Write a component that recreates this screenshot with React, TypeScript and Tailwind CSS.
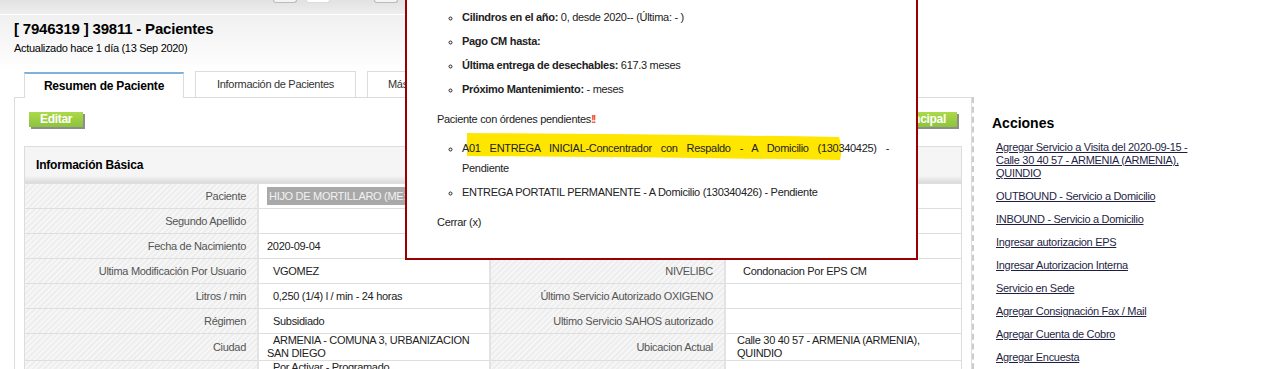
import React from 'react';

type Row = {
  l1: string;
  v1?: React.ReactNode;
  l2: string;
  v2?: React.ReactNode;
};

const ROWS: Row[] = [
  {
    l1: 'Paciente',
    v1: (
      <span className="inline-block bg-[#a9a9a9] px-[2px] leading-[18px] whitespace-nowrap text-[#f2f2f2]">
        HIJO DE MORTILLARO (ME: 1094954812)
      </span>
    ),
    l2: 'Documento',
    v2: 'RC 1094954812',
  },
  { l1: 'Segundo Apellido', v1: '', l2: 'EPS', v2: 'ASMET SALUD' },
  { l1: 'Fecha de Nacimiento', v1: '2020-09-04', l2: 'Teléfono', v2: '3117654321' },
  {
    l1: 'Ultima Modificación Por Usuario',
    v1: <span className="pl-[6px]">VGOMEZ</span>,
    l2: 'NIVELIBC',
    v2: <span className="pl-[6px]">Condonacion Por EPS CM</span>,
  },
  {
    l1: 'Litros / min',
    v1: <span className="pl-[6px]">0,250 (1/4) l / min - 24 horas</span>,
    l2: 'Último Servicio Autorizado OXIGENO',
  },
  {
    l1: 'Régimen',
    v1: <span className="pl-[6px]">Subsidiado</span>,
    l2: 'Ultimo Servicio SAHOS autorizado',
  },
  {
    l1: 'Ciudad',
    v1: <span className="block indent-[6px]">ARMENIA - COMUNA 3, URBANIZACION SAN DIEGO</span>,
    l2: 'Ubicacion Actual',
    v2: 'Calle 30 40 57 - ARMENIA (ARMENIA), QUINDIO',
  },
  {
    l1: 'Estado',
    v1: (
      <span className="block indent-[6px]">
        Por Activar - Programado
        <br />
        desde 2020-09-15
      </span>
    ),
    l2: 'Observaciones',
  },
];

const ACCIONES = [
  'OUTBOUND - Servicio a Domicilio',
  'INBOUND - Servicio a Domicilio',
  'Ingresar autorizacion EPS',
  'Ingresar Autorizacion Interna',
  'Servicio en Sede',
  'Agregar Consignación Fax / Mail',
  'Agregar Cuenta de Cobro',
  'Agregar Encuesta',
];

const labelCls =
  'flex items-center justify-end border-b border-r-2 border-b-[#dedede] border-r-[#e3e3e3] bg-[repeating-linear-gradient(135deg,#f6f6f6_0px,#f6f6f6_2px,#eeeeee_2px,#eeeeee_4px)] pr-[11px] text-right text-[#555]';
const valueCls = 'flex min-h-[25px] items-center overflow-hidden border-b border-[#dedede] pr-[8px]';

function GreenButton({ children }: { children: React.ReactNode }) {
  return (
    <div className="flex h-[15px] items-center bg-linear-to-b from-[#acd94a] to-[#8cc43a] px-[11px] text-[12px] leading-[15px] font-bold text-white shadow-[2px_2px_0_#8d8d8d]">
      {children}
    </div>
  );
}

function App() {
  return (
    <div className="relative h-[369px] w-[1278px] overflow-hidden bg-white font-['Liberation_Sans',Arial,sans-serif] text-[11px] tracking-[-0.3px] text-[#222]">
      {/* barra superior */}
      <div className="flex h-[15px] w-[880px] items-start border-b border-white bg-linear-to-b from-[#e2e2e2] to-[#eeeeee] pl-[273px]">
        <div className="h-[3px] w-[24px] rounded-b-[4px] border border-t-0 border-[#bbb] bg-[#f4f4f4]" />
        <div className="ml-[9px] h-[3px] w-[24px] rounded-b-[4px] border border-t-0 border-[#ddd] bg-white" />
        <div className="ml-[44px] h-[3px] w-[24px] rounded-b-[4px] border border-t-0 border-[#bbb] bg-[#f4f4f4]" />
      </div>

      <div className="h-[56px] w-[880px] bg-linear-to-b from-[#f0f0f0] to-white px-[14px] pt-[5px]">
        <div className="text-[15px] leading-[18px] font-bold tracking-[-0.2px] text-black">
          [ 7946319 ] 39811 - Pacientes
        </div>
        <div className="mt-[3px] text-[11px] leading-[14px] text-black">Actualizado hace 1 día (13 Sep 2020)</div>
      </div>

      {/* tabs */}
      <div className="flex h-[27px] items-end gap-[11px] pl-[24px]">
        <div className="relative z-10 flex h-[26px] w-[160px] items-center justify-center border-x border-t-2 border-x-[#dcdcdc] border-t-[#7fb2de] bg-white text-[12px] font-bold tracking-[-0.2px] text-black">
          Resumen de Paciente
        </div>
        <div className="flex h-[27px] w-[161px] items-center justify-center border-x border-t border-[#dcdcdc] bg-white pb-px text-[11px] text-[#333]">
          Información de Pacientes
        </div>
        <div className="flex h-[27px] w-[150px] items-center border-x border-t border-[#dcdcdc] bg-white pb-px pl-[20px] text-[11px] text-[#333]">
          Más Información
        </div>
      </div>

      <div className="-mt-px flex">
        <div className="ml-[14px] w-[958px] border-x border-t border-[#dcdcdc] px-[9px] pt-[14px]">
          <div className="flex justify-between px-[5px]">
            <GreenButton>Editar</GreenButton>
            <GreenButton>Ir a Dirección Principal</GreenButton>
          </div>

          <div className="mt-[19px] border border-[#dcdcdc]">
            <div className="flex h-[37px] items-center border-b border-[#dedede] bg-[linear-gradient(to_bottom,#f5f5f5_80%,#dadada)] pl-[11px] text-[12px] font-bold tracking-[-0.2px] text-black">
              Información Básica
            </div>
            <div className="grid grid-cols-[234px_232px_235px_235px] leading-[13px]">
              {ROWS.map((r, i) => (
                <React.Fragment key={i}>
                  <div className={labelCls}>{r.l1}</div>
                  <div className={valueCls + ' border-r-2 border-r-[#e3e3e3] pl-[8px]'}>
                    <div>{r.v1}</div>
                  </div>
                  <div className={labelCls}>{r.l2}</div>
                  <div className={valueCls + ' pl-[11px]'}>
                    <div>{r.v2}</div>
                  </div>
                </React.Fragment>
              ))}
            </div>
          </div>
        </div>

        {/* acciones */}
        <div className="flex-1 border-l-2 border-dashed border-[#cccccc] pt-[18px] pl-[18px]">
          <div className="text-[14px] leading-[17px] font-bold tracking-normal text-black">Acciones</div>
          <ul className="mt-[9px] pl-[4px] text-[11px] leading-[13px] text-[#1f1f45]">
            <li className="mb-[10px] w-[212px] underline">
              Agregar Servicio a Visita del 2020-09-15 - Calle 30 40 57 - ARMENIA (ARMENIA), QUINDIO
            </li>
            {ACCIONES.map((a) => (
              <li key={a} className="mb-[10px] underline">
                {a}
              </li>
            ))}
          </ul>
        </div>
      </div>

      {/* ventana emergente */}
      <div className="absolute top-0 left-[405px] z-20 h-[260px] w-[513px] border-2 border-t-0 border-[#990000] bg-white pt-[7px] pr-[27px] pl-[30px] text-[11px] text-[#222]">
        <svg
          className="absolute top-[133px] left-[60px]"
          width="376"
          height="28"
          viewBox="0 0 376 28"
        >
          <path d="M0 0 Q 180 1 372 4 Q 376 15 373 27 Q 180 24 0 23 Z" fill="#ffe600" />
        </svg>
        <ul className="relative mb-[10px] list-[circle] pl-[25px]">
          <li className="mb-[4px] leading-[20px]">
            <b>Cilindros en el año:</b> 0, desde 2020-- (Última: - )
          </li>
          <li className="mb-[4px] leading-[20px]">
            <b>Pago CM hasta:</b>
          </li>
          <li className="mb-[4px] leading-[20px]">
            <b>Última entrega de desechables:</b> 617.3 meses
          </li>
          <li className="mb-[4px] leading-[20px]">
            <b>Próximo Mantenimiento:</b> - meses
          </li>
        </ul>
        <p className="relative leading-[20px]">
          Paciente con órdenes pendientes
          <span className="font-bold tracking-[-2px] text-[#f0501e]">!!</span>
        </p>
        <ul className="relative mt-[9px] list-[circle] pl-[25px]">
          <li className="mb-[4px] leading-[20px]">
            <span className="block text-justify [text-align-last:justify]">
              A01 ENTREGA INICIAL-Concentrador con Respaldo - A Domicilio (130340425) -
            </span>
            Pendiente
          </li>
          <li className="mb-[4px] leading-[20px]">
            ENTREGA PORTATIL PERMANENTE - A Domicilio (130340426) - Pendiente
          </li>
        </ul>
        <p className="relative mt-[10px] leading-[20px]">Cerrar (x)</p>
      </div>
    </div>
  );
}

export default App;
